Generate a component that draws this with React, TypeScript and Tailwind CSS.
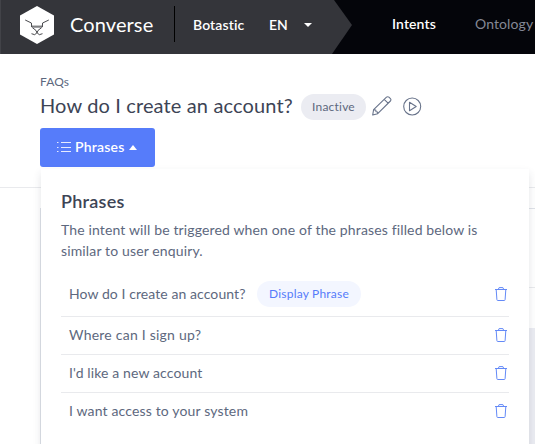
import React from "react";

const phrases = [
  { text: "How do I create an account?", display: true, spacing: "tracking-[0.08px]", height: "h-[46px]" },
  { text: "Where can I sign up?", display: false, spacing: "tracking-[0.23px]", height: "h-[38px] pb-0.5" },
  { text: "I'd like a new account", display: false, spacing: "tracking-[0.12px]", height: "h-[38px] pb-0.5" },
  { text: "I want access to your system", display: false, spacing: "tracking-[0.15px]", height: "h-[38px] pb-[3px]" },
];

function Logo() {
  return (
    <svg className="mb-1 ml-[19px] shrink-0" width="34" height="38" viewBox="0 0 34 38" fill="none">
      <path d="M17 0 34 9.6v18.8L17 38 0 28.4V9.6Z" fill="#fff" />
      <path d="m5.2 14 6.2 3 .3 4 4.3 3.5 1 2.3 1-2.3 4.3-3.5.3-4 6.2-3M11.6 20.2h10.8M11.5 27.7l3.2 1 2.3-2 2.3 2 3.2-1" stroke="#34353a" strokeWidth="0.9" />
      <path d="M12 21.5h10" stroke="#8b8c90" strokeWidth="0.8" />
    </svg>
  );
}

function Trash() {
  return (
    <svg className="mr-0.5 shrink-0" width="12" height="14" viewBox="0 0 12 14" fill="none" stroke="#648af7" strokeWidth="1">
      <path d="M0 2.5h12M3.3 2.4 4.1.6h3.8l.8 1.8M1.2 2.6l.7 10.1c0 .5.3.8.8.8h6.6c.5 0 .8-.3.8-.8l.7-10.1" />
    </svg>
  );
}

export default function App() {
  return (
    <div className="h-[444px] w-[535px] overflow-hidden bg-white font-['Lato','Open_Sans',sans-serif] text-[#5d687e]">
      <header className="flex h-[54px] bg-[#04050a]">
        <div className="flex h-full w-[352px] shrink-0 items-center border-l border-[#424348] bg-[#34353a] text-white [clip-path:polygon(0_0,334px_0,352px_25px,332px_54px,0_54px)]">
          <div className="flex h-full w-[173px] items-center">
            <Logo />
            <span className="ml-4 whitespace-nowrap pb-[7px] text-[20px] tracking-[0.1px]">Converse</span>
          </div>
          <span className="mb-[6px] h-9 w-px bg-black" />
          <span className="ml-[18px] w-[76px] whitespace-nowrap pb-1 text-sm font-semibold tracking-[0.1px]">Botastic</span>
          <span className="w-[35px] pb-1 text-sm font-semibold">EN</span>
          <span className="mb-1 border-x-[4px] border-t-[4px] border-x-transparent border-t-white" />
        </div>
        <nav className="flex items-center whitespace-nowrap pb-[6px] text-sm">
          <span className="ml-10 w-[83px] font-semibold tracking-[0.1px] text-white">Intents</span>
          <span className="tracking-[0.1px] text-[#848895]">Ontology</span>
        </nav>
      </header>

      <section className="relative h-[134px] border-b border-[#e9eaed] pl-10 pt-[19px]">
        <div className="h-[18px] text-xs leading-[18px] tracking-[0.1px]">FAQs</div>
        <div className="mt-[2px] flex h-7 items-center">
          <h1 className="w-[261px] whitespace-nowrap pb-[3px] text-[20px] leading-[25px] tracking-[0.14px] text-[#3d4455]">How do I create an account?</h1>
          <span className="flex h-[26px] w-[65px] items-center justify-center rounded-full bg-[#ebecf2] text-xs tracking-[0.2px]">Inactive</span>
          <svg className="mb-0.5 ml-1.5" width="20" height="20" viewBox="0 0 20 20" fill="none" stroke="#68738a" strokeWidth="1.1" strokeLinejoin="round">
            <path d="m.7 19 .9-5.3L14.5 1.2c.7-.7 1.7-.7 2.4 0l1.5 1.5c.7.7.7 1.6 0 2.3L5.7 17.7ZM12.2 3.3l4.1 4M1.6 13.7l2.2.3.2 1.8 1.6.2.1 1.7" />
          </svg>
          <svg className="mb-px ml-[11px]" width="19" height="19" viewBox="0 0 19 19" fill="none" stroke="#68738a" strokeWidth="1.1" strokeLinejoin="round">
            <circle cx="9.2" cy="9.5" r="8.5" /><path d="M6.5 5.2 13.2 9.5l-6.7 4.2Z" />
          </svg>
        </div>
        <button className="mt-[7px] flex h-[39px] w-[115px] items-center rounded-[3px] bg-[#567cfa] pb-px pl-[17px] text-sm font-semibold text-white">
          <svg width="14" height="12" viewBox="0 0 14 12" stroke="#fff" strokeOpacity="0.85" strokeWidth="1">
            <path d="M4 1.5h10M4 6.5h10M4 10.5h10M0 1.5h1.5M0 6.5h1.5M0 10.5h1.5" />
          </svg>
          <span className="ml-1 w-[54px] text-left tracking-[0.2px]">Phrases</span>
          <span className="border-x-[4.5px] border-b-[5px] border-x-transparent border-b-white" />
        </button>

        <div className="absolute left-[41px] top-[115px] z-10 h-[310px] w-[488px] bg-white px-5 pt-5 shadow-[0_4px_8px_rgba(50,55,75,0.13)]">
          <h2 className="text-[18px] font-semibold leading-6 tracking-[0.25px] text-[#3d4455]">Phrases</h2>
          <p className="mt-[6px] whitespace-nowrap text-sm leading-[21px] tracking-[0.14px]">The intent will be triggered when one of the phrases filled below is<br />similar to user enquiry.</p>
          <ul className="mt-[10px]">
            {phrases.map((phrase) => (
              <li key={phrase.text} className={`flex items-center border-b border-[#e9eaed] pl-2 last:border-0 ${phrase.height}`}>
                <span className={`whitespace-nowrap text-sm ${phrase.spacing} ${phrase.display ? "w-[188px]" : ""}`}>{phrase.text}</span>
                {phrase.display && <span className="flex h-[26px] w-[104px] items-center justify-center rounded-full bg-[#f3f6ff] text-xs tracking-[0.2px] text-[#567cfa]">Display Phrase</span>}
                <span className="ml-auto"><Trash /></span>
              </li>
            ))}
          </ul>
        </div>
      </section>
      <main className="pl-10 pt-5">
        <div className="h-[236px] border-l border-t border-[#dfe2e8]">
          <div className="h-[79px] border-b border-[#e9eaed]" />
          <div className="h-10" />
          <div className="h-[117px] bg-[#ebecf2]" />
        </div>
      </main>
    </div>
  );
}
